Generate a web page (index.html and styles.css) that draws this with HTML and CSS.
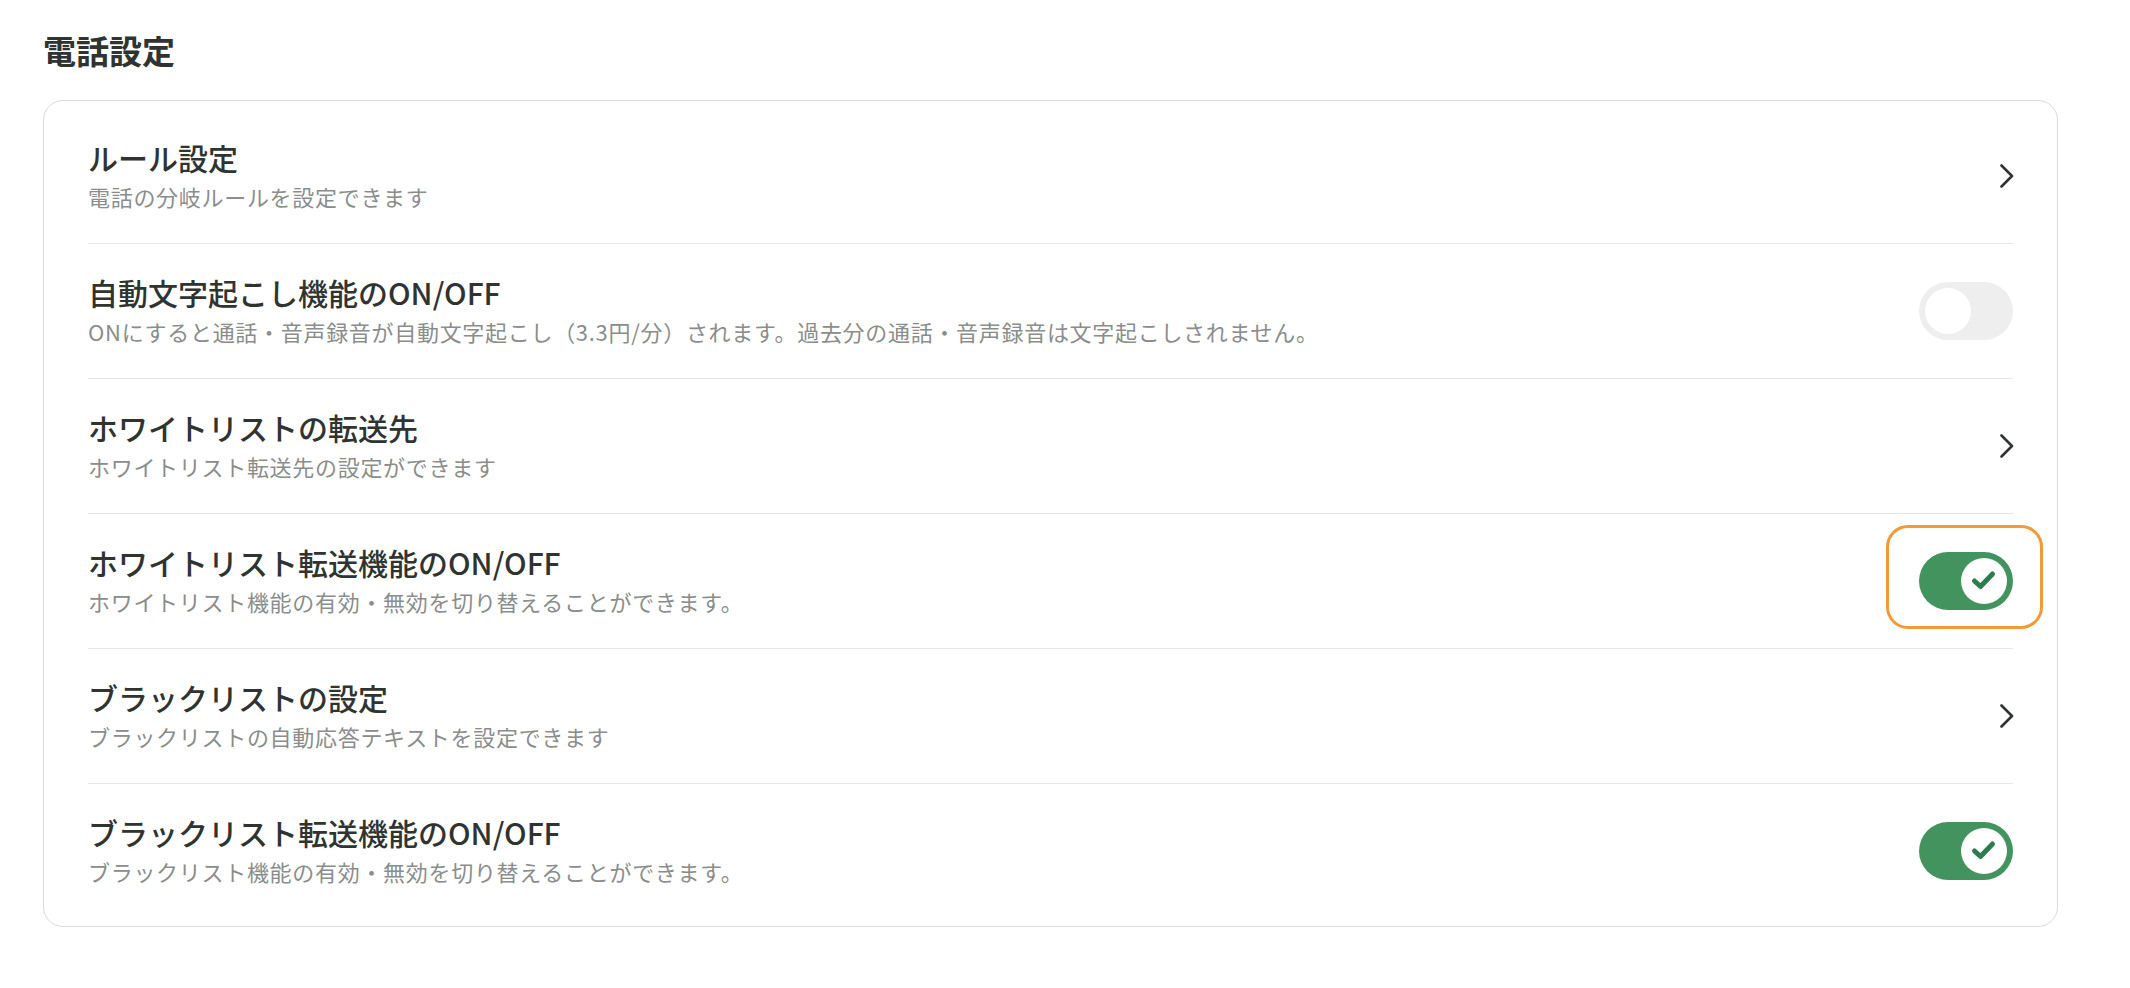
FILE: index.html
```html
<!DOCTYPE html>
<html lang="ja">
<head>
    <meta charset="UTF-8">
    <meta name="viewport" content="width=device-width, initial-scale=1.0">
    <title>電話設定</title>
    <link rel="stylesheet" href="styles.css">
</head>
<body>
    <div class="page">
        <h1 class="page-title">電話設定</h1>

        <!-- Settings list -->
        <div class="settings-card">
            <div class="setting-row">
                <div class="setting-text">
                    <div class="setting-name">ルール設定</div>
                    <div class="setting-desc">電話の分岐ルールを設定できます</div>
                </div>
                <svg class="chevron" width="16" height="24" viewBox="0 0 16 24">
                    <path d="M2.5 1.5 L13 12 L2.5 22.5" fill="none" stroke="#2f3431" stroke-width="2.6" stroke-linecap="round" stroke-linejoin="round"/>
                </svg>
            </div>

            <div class="setting-row">
                <div class="setting-text">
                    <div class="setting-name">自動文字起こし機能のON/OFF</div>
                    <div class="setting-desc">ONにすると通話・音声録音が自動文字起こし（3.3円/分）されます。過去分の通話・音声録音は文字起こしされません。</div>
                </div>
                <div class="toggle">
                    <span class="knob"></span>
                </div>
            </div>

            <div class="setting-row">
                <div class="setting-text">
                    <div class="setting-name">ホワイトリストの転送先</div>
                    <div class="setting-desc">ホワイトリスト転送先の設定ができます</div>
                </div>
                <svg class="chevron" width="16" height="24" viewBox="0 0 16 24">
                    <path d="M2.5 1.5 L13 12 L2.5 22.5" fill="none" stroke="#2f3431" stroke-width="2.6" stroke-linecap="round" stroke-linejoin="round"/>
                </svg>
            </div>

            <div class="setting-row">
                <div class="setting-text">
                    <div class="setting-name">ホワイトリスト転送機能のON/OFF</div>
                    <div class="setting-desc">ホワイトリスト機能の有効・無効を切り替えることができます。</div>
                </div>
                <div class="toggle on focused">
                    <span class="knob">
                        <svg width="46" height="46" viewBox="0 0 46 46">
                            <path d="M13.5 23 L19.5 28.5 L31.5 16" fill="none" stroke="#2e7d4f" stroke-width="5" stroke-linecap="round" stroke-linejoin="round"/>
                        </svg>
                    </span>
                </div>
            </div>

            <div class="setting-row">
                <div class="setting-text">
                    <div class="setting-name">ブラックリストの設定</div>
                    <div class="setting-desc">ブラックリストの自動応答テキストを設定できます</div>
                </div>
                <svg class="chevron" width="16" height="24" viewBox="0 0 16 24">
                    <path d="M2.5 1.5 L13 12 L2.5 22.5" fill="none" stroke="#2f3431" stroke-width="2.6" stroke-linecap="round" stroke-linejoin="round"/>
                </svg>
            </div>

            <div class="setting-row">
                <div class="setting-text">
                    <div class="setting-name">ブラックリスト転送機能のON/OFF</div>
                    <div class="setting-desc">ブラックリスト機能の有効・無効を切り替えることができます。</div>
                </div>
                <div class="toggle on">
                    <span class="knob">
                        <svg width="46" height="46" viewBox="0 0 46 46">
                            <path d="M13.5 23 L19.5 28.5 L31.5 16" fill="none" stroke="#2e7d4f" stroke-width="5" stroke-linecap="round" stroke-linejoin="round"/>
                        </svg>
                    </span>
                </div>
            </div>
        </div>
    </div>
</body>
</html>
```

FILE: styles.css
```css
/* General Styling */
body {
    font-family: "Noto Sans CJK JP", "Noto Sans", sans-serif;
    margin: 0;
    padding: 0;
    background: #fff;
    color: #2f3431;
}

.page {
    padding: 26px 72px 40px 43px;
}

.page-title {
    font-size: 33px;
    font-weight: 700;
    line-height: 48px;
    margin: 0 0 26px;
    color: #2f3431;
}

/* Card Container */
.settings-card {
    border: 1px solid #dadada;
    border-radius: 20px;
    padding: 8px 44px;
}

.setting-row {
    display: flex;
    align-items: center;
    justify-content: space-between;
    height: 134px;
    border-bottom: 1px solid #e6e6e6;
}

.setting-row:last-child {
    border-bottom: none;
}

.setting-text {
    padding-bottom: 5px;
}

.setting-name {
    font-size: 30px;
    font-weight: 500;
    line-height: 42px;
    margin-bottom: 3px;
    color: #2f3431;
}

.setting-desc {
    font-size: 22px;
    line-height: 31px;
    color: #8a8d8c;
    letter-spacing: 0.7px;
}

.chevron {
    display: block;
    margin-right: -2px;
}

/* Toggle Switch */
.toggle {
    position: relative;
    width: 94px;
    height: 58px;
    border-radius: 29px;
    background: #eeeeee;
    flex-shrink: 0;
}

.toggle .knob {
    position: absolute;
    top: 6px;
    left: 6px;
    width: 46px;
    height: 46px;
    border-radius: 50%;
    background: #fff;
}

.toggle .knob svg {
    display: block;
}

.toggle.on {
    background: #43935f;
}

.toggle.on .knob {
    left: auto;
    right: 6px;
}

.toggle.focused::after {
    content: "";
    position: absolute;
    top: -27px;
    bottom: -19px;
    left: -33px;
    right: -30px;
    border: 3px solid #f39a36;
    border-radius: 22px;
}
```
